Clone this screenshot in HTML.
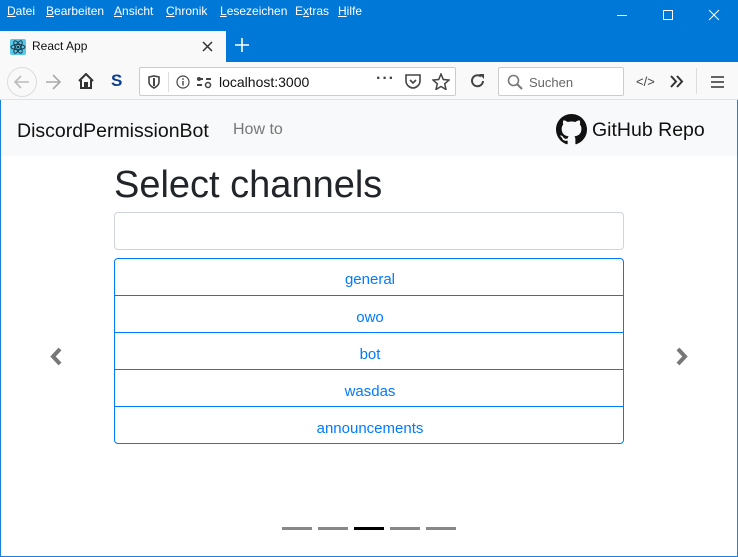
<!DOCTYPE html>
<html><head><meta charset="utf-8"><style>
*{box-sizing:border-box;margin:0;padding:0}
body{width:738px;height:557px;overflow:hidden;font-family:"Liberation Sans",sans-serif;background:#fff;position:relative}
.abs{position:absolute}
.title{left:0;top:0;width:738px;height:31px;background:#0078d7;color:#fff;font-size:12px}
.menu span{position:absolute;top:4px}
.tabrow{left:0;top:31px;width:738px;height:31px;background:#0078d7}
.tab{left:0;top:31px;width:226px;height:31px;background:#f9f9fa}
.nav{left:0;top:62px;width:738px;height:38px;background:#f9f9fa;border-bottom:1px solid #e0e0e0}
.url{left:139px;top:67px;width:317px;height:29px;background:#fff;border:1px solid #ccc;border-radius:2px}
.search{left:498px;top:67px;width:126px;height:29px;background:#fff;border:1px solid #ccc;border-radius:2px}
.bnav{left:1px;top:100px;width:736px;height:56px;background:#f8f9fa}
.win{left:0;top:100px;width:738px;height:457px;border:1px solid #1a82d9;border-top:none}
.item{position:absolute;left:0;width:510px;height:37px;border-top:1px solid #007bff;color:#007bff;font-size:15px;text-align:center;line-height:43px}
.ind{position:absolute;top:527px;width:30px;height:3px;background:#888}
</style></head><body>
<div class="abs title menu">
<span style="left:7px"><u>D</u>atei</span><span style="left:46px"><u>B</u>earbeiten</span><span style="left:114px"><u>A</u>nsicht</span><span style="left:166px"><u>C</u>hronik</span><span style="left:220px"><u>L</u>esezeichen</span><span style="left:295px">E<u>x</u>tras</span><span style="left:338px"><u>H</u>ilfe</span>
<div class="abs" style="left:617px;top:15px;width:10px;height:1px;background:#fff"></div>
<div class="abs" style="left:663px;top:10px;width:10px;height:10px;border:1px solid #fff"></div>
<svg class="abs" style="left:708px;top:9px" width="12" height="12"><path d="M1 1L11 11M11 1L1 11" stroke="#fff" stroke-width="1"/></svg>
</div>
<div class="abs tabrow"></div>
<div class="abs tab">
<svg class="abs" style="left:10px;top:8px" width="16" height="16"><rect width="16" height="16" rx="2" fill="#5ac8e8"/><g fill="none" stroke="#1d3a4a" stroke-width="1"><ellipse cx="8" cy="8" rx="7" ry="2.6"/><ellipse cx="8" cy="8" rx="7" ry="2.6" transform="rotate(60 8 8)"/><ellipse cx="8" cy="8" rx="7" ry="2.6" transform="rotate(120 8 8)"/></g><circle cx="8" cy="8" r="1.3" fill="#1d3a4a"/></svg>
<span class="abs" style="left:32px;top:8px;font-size:12px;color:#111">React App</span>
<svg class="abs" style="left:202px;top:10px" width="11" height="11"><path d="M1 1L10 10M10 1L1 10" stroke="#333" stroke-width="1.5"/></svg>
</div>
<svg class="abs" style="left:235px;top:38px" width="14" height="14"><path d="M7 0V14M0 7H14" stroke="#fff" stroke-width="1.6"/></svg>
<div class="abs nav"></div>
<svg class="abs" style="left:6px;top:66px" width="32" height="32"><circle cx="16" cy="16" r="14.5" fill="none" stroke="#ddd"/><path d="M23 16H10M15 10L9 16L15 22" stroke="#bbb" stroke-width="1.6" fill="none"/></svg>
<svg class="abs" style="left:44px;top:74px" width="18" height="16"><path d="M16 8H2M9 1L16 8L9 15" stroke="#aaa" stroke-width="1.6" fill="none"/></svg>
<svg class="abs" style="left:78px;top:73px" width="16" height="16"><path d="M1 8L8 1L15 8M3 7V15H7V10H9V15H13V7" stroke="#333" stroke-width="2" fill="none"/></svg>
<span class="abs" style="left:111px;top:71px;font-weight:bold;font-size:17px;color:#0b3d91">S</span>
<div class="abs url"></div>
<svg class="abs" style="left:148px;top:75px" width="12" height="14"><path d="M1 2L6 1L11 2V7C11 10 8 12 6 13C4 12 1 10 1 7Z" fill="none" stroke="#444" stroke-width="1.6"/><path d="M6 3V11" stroke="#444" stroke-width="2"/></svg>
<div class="abs" style="left:168px;top:72px;width:1px;height:20px;background:#ddd"></div>
<svg class="abs" style="left:176px;top:75px" width="14" height="14"><circle cx="7" cy="7" r="6" fill="none" stroke="#444" stroke-width="1.2"/><path d="M7 6V10.5" stroke="#444" stroke-width="1.4"/><circle cx="7" cy="4" r="0.9" fill="#444"/></svg>
<svg class="abs" style="left:196px;top:75px" width="16" height="14"><path d="M1 4H7M1 10H6" stroke="#444" stroke-width="2"/><circle cx="3" cy="4" r="2" fill="#444"/><circle cx="12" cy="10" r="2.5" fill="none" stroke="#444" stroke-width="1.5"/><path d="M10 4H15" stroke="#444" stroke-width="2"/></svg>
<span class="abs" style="left:219px;top:74px;font-size:14px;color:#111">localhost:3000</span>
<span class="abs" style="left:376px;top:70px;font-size:16px;color:#444;font-weight:bold;letter-spacing:1px">···</span>
<svg class="abs" style="left:405px;top:74px" width="16" height="15"><path d="M1 1H15V7C15 11 11 14 8 14C5 14 1 11 1 7Z" fill="none" stroke="#444" stroke-width="1.6"/><path d="M5 6L8 9L11 6" fill="none" stroke="#444" stroke-width="1.6"/></svg>
<svg class="abs" style="left:432px;top:73px" width="18" height="17"><path d="M9 1L11.3 6.5L17 7L12.7 10.8L14 16.5L9 13.5L4 16.5L5.3 10.8L1 7L6.7 6.5Z" fill="none" stroke="#444" stroke-width="1.5"/></svg>
<svg class="abs" style="left:470px;top:73px" width="16" height="16"><path d="M13 8A5.5 5.5 0 1 1 11 3.5" fill="none" stroke="#444" stroke-width="2"/><path d="M9 1H14V6Z" fill="#444"/></svg>
<div class="abs search"></div>
<svg class="abs" style="left:507px;top:74px" width="16" height="16"><circle cx="6.5" cy="6.5" r="5" fill="none" stroke="#777" stroke-width="1.6"/><path d="M10 10L15 15" stroke="#777" stroke-width="2"/></svg>
<span class="abs" style="left:529px;top:75px;font-size:13px;color:#666">Suchen</span>
<span class="abs" style="left:636px;top:74px;font-size:13px;color:#444">&lt;/&gt;</span>
<svg class="abs" style="left:670px;top:75px" width="14" height="13"><path d="M1 1L6 6.5L1 12M7 1L12 6.5L7 12" fill="none" stroke="#333" stroke-width="2"/></svg>
<div class="abs" style="left:696px;top:68px;width:1px;height:26px;background:#ddd"></div>
<svg class="abs" style="left:711px;top:76px" width="13" height="12"><path d="M0 1H13M0 6H13M0 11H13" stroke="#333" stroke-width="1.6"/></svg>
<div class="abs bnav"></div>
<span class="abs" style="left:17px;top:120px;font-size:19.5px;color:#111">DiscordPermissionBot</span>
<span class="abs" style="left:233px;top:121px;font-size:16px;color:#777">How to</span>
<svg class="abs" style="left:556px;top:114px" width="31" height="31" viewBox="0 0 16 16"><path fill="#111" d="M8 0C3.58 0 0 3.580 0 8c0 3.54 2.29 6.53 5.470 7.59.4.07.55-.17.55-.38 0-.19-.01-.82-.01-1.49-2.01.37-2.53-.49-2.690-.94-.09-.23-.48-.94-.82-1.13-.28-.15-.68-.52-.01-.53.63-.01 1.08.58 1.23.82.72 1.21 1.87.87 2.33.66.07-.52.28-.87.51-1.07-1.78-.2-3.64-.89-3.64-3.95 0-.87.31-1.59.82-2.15-.08-.2-.36-1.02.08-2.12 0 0 .67-.21 2.2.82.64-.18 1.32-.27 2-.27.68 0 1.36.09 2 .27 1.53-1.04 2.2-.82 2.2-.82.44 1.1.16 1.92.08 2.12.51.56.82 1.27.82 2.15 0 3.07-1.87 3.75-3.65 3.95.29.25.54.73.54 1.48 0 1.07-.01 1.93-.01 2.2 0 .21.15.46.55.38A8.013 8.013 0 0016 8c0-4.42-3.58-8-8-8z"/></svg>
<span class="abs" style="left:592px;top:119px;font-size:19.5px;color:#111">GitHub Repo</span>
<div class="abs" style="left:114px;top:163px;font-size:38px;color:#212529;line-height:44px">Select channels</div>
<div class="abs" style="left:114px;top:212px;width:510px;height:38px;border:1px solid #ced4da;border-radius:4px"></div>
<div class="abs" style="left:114px;top:258px;width:510px;height:186px;border:1px solid #007bff;border-radius:4px;overflow:hidden">
<div class="item" style="top:-1px;border-top:none">general</div>
<div class="item" style="top:36px">owo</div>
<div class="item" style="top:73px">bot</div>
<div class="item" style="top:110px">wasdas</div>
<div class="item" style="top:147px">announcements</div>
</div>
<svg class="abs" style="left:49px;top:347px" width="14" height="19"><path d="M11 2L4 9.5L11 17" fill="none" stroke="#777" stroke-width="4"/></svg>
<svg class="abs" style="left:675px;top:347px" width="14" height="19"><path d="M3 2L10 9.5L3 17" fill="none" stroke="#777" stroke-width="4"/></svg>
<div class="ind" style="left:282px"></div><div class="ind" style="left:318px"></div><div class="ind" style="left:354px;background:#000"></div><div class="ind" style="left:390px"></div><div class="ind" style="left:426px"></div>
<div class="abs win"></div>
</body></html>
